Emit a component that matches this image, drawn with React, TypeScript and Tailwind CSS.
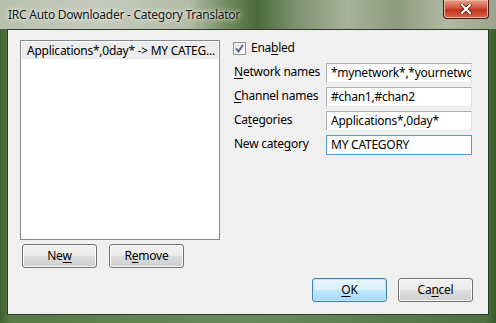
import React from 'react';

const FONT = { fontFamily: '"Segoe UI", "Noto Sans", "Liberation Sans", sans-serif' };

function U({ children }: { children: React.ReactNode }) {
  return <span className="underline decoration-1 underline-offset-2">{children}</span>;
}

function Btn({ children, primary }: { children: React.ReactNode; primary?: boolean }) {
  return (
    <button
      className={`flex h-[24px] w-[75px] items-center justify-center rounded-[3px] border text-[12px] text-black ${
        primary
          ? 'border-[#3c7fb1] bg-[linear-gradient(#eaf6fd_0%,#d9f0fc_50%,#bee6fd_51%,#a7d9f5_100%)] shadow-[inset_0_0_0_1px_#c4e5f6]'
          : 'border-[#707070] bg-[linear-gradient(#f2f2f2_0%,#ebebeb_50%,#dddddd_51%,#cfcfcf_100%)] shadow-[inset_0_0_0_1px_#fcfcfc]'
      }`}
    >
      {children}
    </button>
  );
}

function Field({ label, value, focused }: { label: React.ReactNode; value: string; focused?: boolean }) {
  return (
    <div className="flex h-[24px] items-start">
      <div className="w-[93px] whitespace-nowrap pl-[1px] pt-[1px] text-[12px] leading-[16px] text-black">{label}</div>
      <div
        className={`flex h-[20px] w-[146px] items-center overflow-hidden whitespace-nowrap border bg-white pl-[4px] text-[12px] text-black ${
          focused ? 'border-[#569de5]' : 'border-[#abadb3] border-b-[#e3e9ef] border-r-[#dbdfe6]'
        }`}
      >
        {value}
      </div>
    </div>
  );
}

export default function App() {
  return (
    <div
      style={FONT}
      className="flex h-[323px] w-[496px] flex-col overflow-hidden bg-[linear-gradient(90deg,#3f6233_0%,#567a46_2%,#6d8a5c_50%,#4f7040_98%,#3a5a2e_100%)] tracking-[-0.25px]"
    >
      {/* title bar */}
      <div className="relative flex h-[29px] shrink-0 items-center bg-[linear-gradient(90deg,#b9c0ad_0%,#c6cabd_20%,#b4bba6_38%,#6f8a5e_46%,#4c6b3d_52%,#7d9470_60%,#a9b29b_70%,#8e9b7f_80%,#b1b8a3_90%,#9aa38b_100%)] pl-[8px]">
        <span className="text-[12px] text-[#151515] [text-shadow:0_0_6px_#eef0e8,0_0_3px_#eef0e8]">
          IRC Auto Downloader - Category Translator
        </span>
        <div className="absolute right-[7px] top-0 flex h-[19px] w-[46px] items-center justify-center rounded-b-[4px] border border-t-0 border-[#4a1a12] bg-[linear-gradient(#e9a08c_0%,#d2553b_45%,#c2341c_55%,#d8664a_100%)] shadow-[inset_0_0_0_1px_#f0b8a8]">
          <svg width="12" height="10" viewBox="0 0 12 10">
            <path d="M2 1 L10 9 M10 1 L2 9" stroke="#3a1008" strokeWidth="3.6" strokeLinecap="square" />
            <path d="M2 1 L10 9 M10 1 L2 9" stroke="#ffffff" strokeWidth="2.2" strokeLinecap="square" />
          </svg>
        </div>
      </div>

      {/* client area */}
      <div className="mx-[7px] mb-[8px] flex flex-1 flex-col border border-[#2d3b26] bg-[#f0f0f0]">
        <div className="flex pl-[12px] pt-[10px]">
          <div className="flex flex-col">
            <div className="h-[200px] w-[200px] border border-[#828790] bg-white p-[1px]">
              <div className="flex h-[17px] items-center whitespace-nowrap bg-[#ececec] pl-[5px] text-[12px] text-black">
                Applications*,0day* -&gt; MY CATEG...
              </div>
            </div>
            <div className="mt-[4px] flex gap-[12px] pl-[2px]">
              <Btn>
                Ne<U>w</U>
              </Btn>
              <Btn>
                R<U>e</U>move
              </Btn>
            </div>
          </div>

          <div className="ml-[13px] flex w-[239px] flex-col pt-[2px]">
            <div className="flex h-[21px] items-start gap-[5px]">
              <div className="flex h-[13px] w-[13px] items-center justify-center border border-[#8e8f8f] bg-[linear-gradient(135deg,#dcdcdc,#ffffff)] shadow-[inset_0_0_0_1px_#f4f4f4]">
                <svg width="9" height="9" viewBox="0 0 9 9">
                  <path d="M1 4.5 L3.5 7.5 L8 1" fill="none" stroke="#4a5f97" strokeWidth="1.8" />
                </svg>
              </div>
              <span className="-mt-[2px] text-[12px] leading-[16px] text-black">
                Ena<U>b</U>led
              </span>
            </div>
            <Field label={<><U>N</U>etwork names</>} value="*mynetwork*,*yournetwor" />
            <Field label={<><U>C</U>hannel names</>} value="#chan1,#chan2" />
            <Field label={<>Ca<U>t</U>egories</>} value="Applications*,0day*" />
            <Field label={<>New cate<U>g</U>ory</>} value="MY CATEGORY" focused />
          </div>
        </div>

        <div className="flex-1" />
        <div className="mb-[12px] flex justify-end gap-[11px] pr-[15px]">
          <Btn primary>
            <U>O</U>K
          </Btn>
          <Btn>
            Ca<U>n</U>cel
          </Btn>
        </div>
      </div>
    </div>
  );
}
